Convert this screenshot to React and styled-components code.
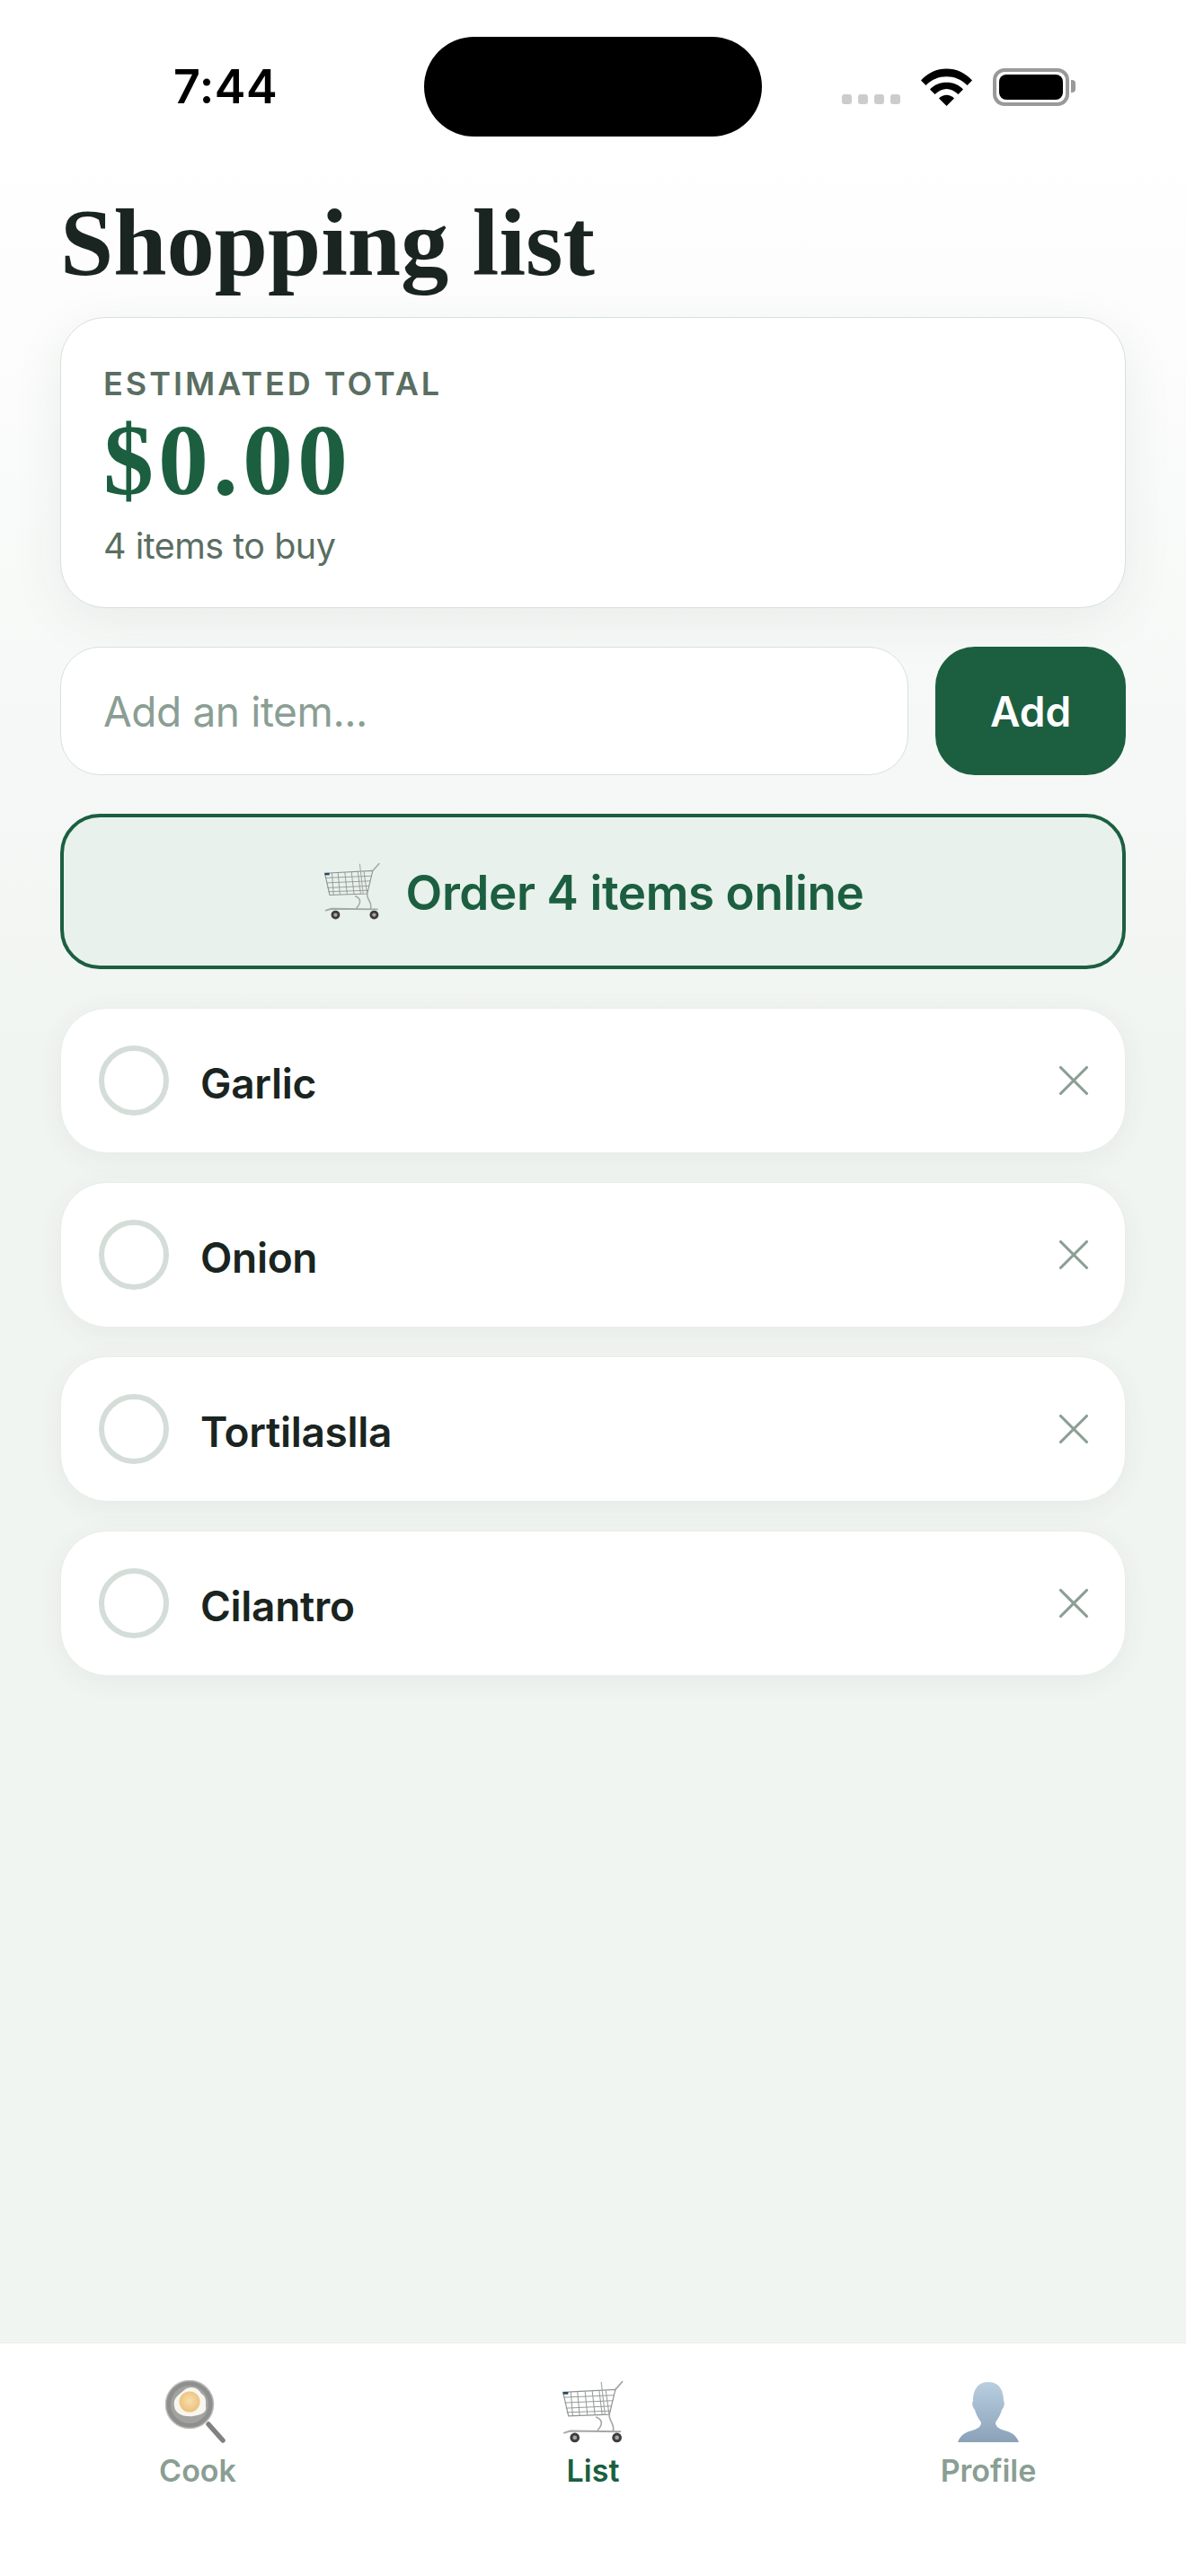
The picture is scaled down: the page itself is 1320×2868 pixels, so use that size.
import React from "react";
import styled, { createGlobalStyle } from "styled-components";
import { X } from "lucide-react";

const Global = createGlobalStyle`
  html, body { margin: 0; padding: 0; background: #f1f5f2; }
  * { box-sizing: border-box; }
`;
const Sans = `Inter, "Noto Sans", sans-serif`;
const Serif = `"Liberation Serif", serif`;

const Page = styled.div`
  width: 1320px; height: 2868px; display: flex; flex-direction: column; overflow: hidden;
  background: linear-gradient(180deg, #ffffff 0px, #ffffff 130px, #f1f5f2 1150px, #f1f5f2 100%);
  font-family: ${Sans}; color: #1a2420;
`;
const StatusBar = styled.div`display: flex; align-items: center; padding-top: 41px; height: 152px;`;
const Time = styled.div`width: 472px; padding-left: 193px; font-size: 52px; font-weight: 600; color: #000; letter-spacing: 0.5px;`;
const Island = styled.div`width: 376px; height: 111px; border-radius: 56px; background: #000;`;
const StatusRight = styled.div`display: flex; align-items: center; padding-left: 89px; height: 60px;`;
const Dots = styled.div`display: flex; gap: 7px; margin-top: 28px; margin-right: 23px;`;
const Dot = styled.span`width: 11px; height: 11px; border-radius: 3px; background: #cccccc;`;
const Battery = styled.div`position: relative; margin-left: 23px; width: 85px; height: 42px; border: 4px solid #999; border-radius: 13px; padding: 3px; &::after { content: ""; position: absolute; right: -11px; top: 9px; width: 5px; height: 14px; background: #999; border-radius: 0 4px 4px 0; }`;
const BatteryFill = styled.div`width: 100%; height: 100%; background: #000; border-radius: 8px;`;

const Main = styled.main`flex: 1; padding: 0 67px; display: flex; flex-direction: column;`;
const Title = styled.h1`margin: 59px 0 23px; font-family: ${Serif}; font-size: 106.5px; line-height: 119px; font-weight: 700; color: #1a2420;`;
const TotalCard = styled.section`
  height: 324px; background: #fff; border: 1.5px solid #d8e0dc; border-radius: 50px; padding: 51px 47px 0;
  box-shadow: 0 14px 60px rgba(26, 60, 44, 0.07); margin-bottom: 43px;
`;
const TotalLabel = styled.div`font-size: 36px; line-height: 44px; font-weight: 600; letter-spacing: 3px; color: #5a6e62;`;
const Amount = styled.div`font-family: ${Serif}; font-weight: 700; font-size: 112px; line-height: 108px; letter-spacing: 5px; color: #1c5f40; margin-top: 9px;`;
const Sub = styled.div`font-size: 39.500px; line-height: 46px; color: #5a6e62; margin-top: 19px; letter-spacing: -0.5px;`;

const AddRow = styled.div`display: flex; gap: 30px; height: 143px; margin-bottom: 43px;`;
const Input = styled.div`flex: 1; display: flex; align-items: center; padding-left: 47px; background: #fff; border: 1.5px solid #d8e0dc; border-radius: 44px; font-size: 46px; letter-spacing: -0.4px; color: #8a9e94;`;
const AddButton = styled.button`width: 212px; border: 0; border-radius: 44px; background: #1c5f40; color: #fff; font-family: ${Sans}; font-size: 46px; font-weight: 600; padding-top: 2px;`;
const OrderButton = styled.button`
  height: 173px; margin-bottom: 43px; display: flex; align-items: center; justify-content: center; gap: 27px;
  background: #e8f1ec; border: 4.5px solid #1c5f40; border-radius: 44px; color: #1c5f40;
  font-family: ${Sans}; font-size: 53px; font-weight: 600; letter-spacing: -0.4px; line-height: 60px;
`;
const OrderText = styled.span`padding-top: 3px;`;
const List = styled.div`display: flex; flex-direction: column; gap: 32px;`;
const Row = styled.div`
  height: 162px; display: flex; align-items: center; padding: 0 42px; background: #fff; border-radius: 52px;
  border: 1px solid #e8eeea; box-shadow: 0 6px 30px rgba(26, 60, 44, 0.06);
`;
const Check = styled.span`width: 78px; height: 78px; border: 6px solid #d4ddd8; border-radius: 50%; flex: none;`;
const ItemName = styled.span`flex: 1; margin-left: 35px; font-size: 46px; font-weight: 600; letter-spacing: -0.3px; color: #1a2420; padding-top: 6px;`;
const Remove = styled.span`display: flex; color: #8a9e94; margin-right: -14px;`;

const Nav = styled.nav`height: 260px; display: grid; grid-template-columns: repeat(3, 1fr); background: #fff; border-top: 1px solid #e8eeea;`;
const Tab = styled.div`display: flex; flex-direction: column; align-items: center; padding-top: 41px;`;
const TabIcon = styled.div`height: 72px; display: flex; align-items: center; justify-content: center;`;
const TabLabel = styled.div`margin-top: 8px; font-size: 34px; line-height: 42px; font-weight: 600; color: ${p => (p.$active ? "#1c5f40" : "#8a9e94")};`;

const Wifi = () => (
  <svg width="57" height="42" viewBox="0 0 57 42">
    <path d="M0 13.5C15-4 42-4 57 13.5L51.5 19C39 6 18 6 5.500 19Z" fill="#000" />
    <path d="M10 23.500C19 13 38 13 47 23.500L41.5 29C33 21 24 21 15.500 29Z" fill="#000" />
    <path d="M20 33.500C25 28.500 32 28.500 37 33.500L28.500 42Z" fill="#000" />
  </svg>
);

const Cart = ({ width }) => {
  const verts = [134, 156, 181, 205, 228, 250];
  return (
    <svg width={width} viewBox="100 90 215 220">
      <g fill="none" stroke="#8f9392" strokeWidth="2.800">
        <path d="M108 133 L282 124 L262 207 L126 212 Z" strokeWidth="3.500" />
        {verts.map((x, i) => <path key={x} d={`M${x} ${132 - i} L${x + 6 + i} ${211 - i}`} />)}
        <path d="M111 150 L277 143" /><path d="M114 168 L273 161" /><path d="M117 186 L269 179" /><path d="M120 200 L266 195" />
      </g>
      <g fill="none" stroke="#a5a8a7" strokeLinecap="round">
        <path d="M282 124 L305 98" strokeWidth="5" />
        <path d="M235 100 L247 205" strokeWidth="3.500" />
        <path d="M219 216 C240 225 240 240 224 258" strokeWidth="5" />
        <path d="M262 208 C258 225 282 240 274 262" strokeWidth="5" />
        <path d="M112 268 L132 262 L298 264" strokeWidth="6" />
      </g>
      <rect x="108" y="132" width="17" height="8" fill="#27485e" />
      {[147, 287].map(cx => (
        <g key={cx}>
          <circle cx={cx} cy="284" r="16" fill="#3e3c3c" />
          <circle cx={cx} cy="284" r="7" fill="#a8a6a5" />
        </g>
      ))}
    </svg>
  );
};

const Pan = () => (
  <svg width="72" height="72" viewBox="0 0 72 72">
    <defs>
      <radialGradient id="yolk" cx="50%" cy="45%" r="55%">
        <stop offset="0" stopColor="#f7dfae" /><stop offset="1" stopColor="#ecc07a" />
      </radialGradient>
    </defs>
    <path d="M48 49 L64 67" stroke="#7f8280" strokeWidth="5.500" strokeLinecap="round" />
    <circle cx="27" cy="27" r="26.500" fill="#8e908e" stroke="#b9bab8" strokeWidth="1.500" />
    <circle cx="27" cy="27" r="21" fill="#a2a3a1" />
    <path d="M10 29 C8 19 16 16 21 11 C29 5 37 9 40 15 C46 18 45 25 45 29 C47 37 37 39 31 40 C23 41 11 39 10 29 Z" fill="#f8f6ef" />
    <circle cx="27" cy="24" r="11.500" fill="url(#yolk)" />
  </svg>
);

const Person = () => (
  <svg width="68" height="68" viewBox="0 0 68 68">
    <defs>
      <linearGradient id="person" x1="0" y1="0" x2="0" y2="1">
        <stop offset="0" stopColor="#b9cfe0" /><stop offset="1" stopColor="#8aa1b8" />
      </linearGradient>
    </defs>
    <path d="M34 0C48 0 51 12 51 21C53 24 51 29 49 31C47 38 44 42 42 45C42 50 46 52 52 54C60 56 65 59 68 67L0 67C3 59 8 56 16 54C22 52 26 50 26 45C24 42 21 38 19 31C17 29 15 24 17 21C17 12 20 0 34 0Z" fill="url(#person)" />
  </svg>
);

const items = ["Garlic", "Onion", "Tortilaslla", "Cilantro"];

export default function App() {
  return (
    <Page>
      <Global />
      <StatusBar>
        <Time>7:44</Time>
        <Island />
        <StatusRight>
          <Dots><Dot /><Dot /><Dot /><Dot /></Dots>
          <Wifi />
          <Battery><BatteryFill /></Battery>
        </StatusRight>
      </StatusBar>
      <Main>
        <Title>Shopping list</Title>
        <TotalCard>
          <TotalLabel>ESTIMATED TOTAL</TotalLabel>
          <Amount>$0.00</Amount>
          <Sub>4 items to buy</Sub>
        </TotalCard>
        <AddRow>
          <Input>Add an item...</Input>
          <AddButton>Add</AddButton>
        </AddRow>
        <OrderButton><Cart width={66} /><OrderText>Order 4 items online</OrderText></OrderButton>
        <List>
          {items.map(name => (
            <Row key={name}>
              <Check />
              <ItemName>{name}</ItemName>
              <Remove><X size={58} strokeWidth={1.3} /></Remove>
            </Row>
          ))}
        </List>
      </Main>
      <Nav>
        <Tab><TabIcon><Pan /></TabIcon><TabLabel>Cook</TabLabel></Tab>
        <Tab><TabIcon><Cart width={72} /></TabIcon><TabLabel $active>List</TabLabel></Tab>
        <Tab><TabIcon><Person /></TabIcon><TabLabel>Profile</TabLabel></Tab>
      </Nav>
    </Page>
  );
}
